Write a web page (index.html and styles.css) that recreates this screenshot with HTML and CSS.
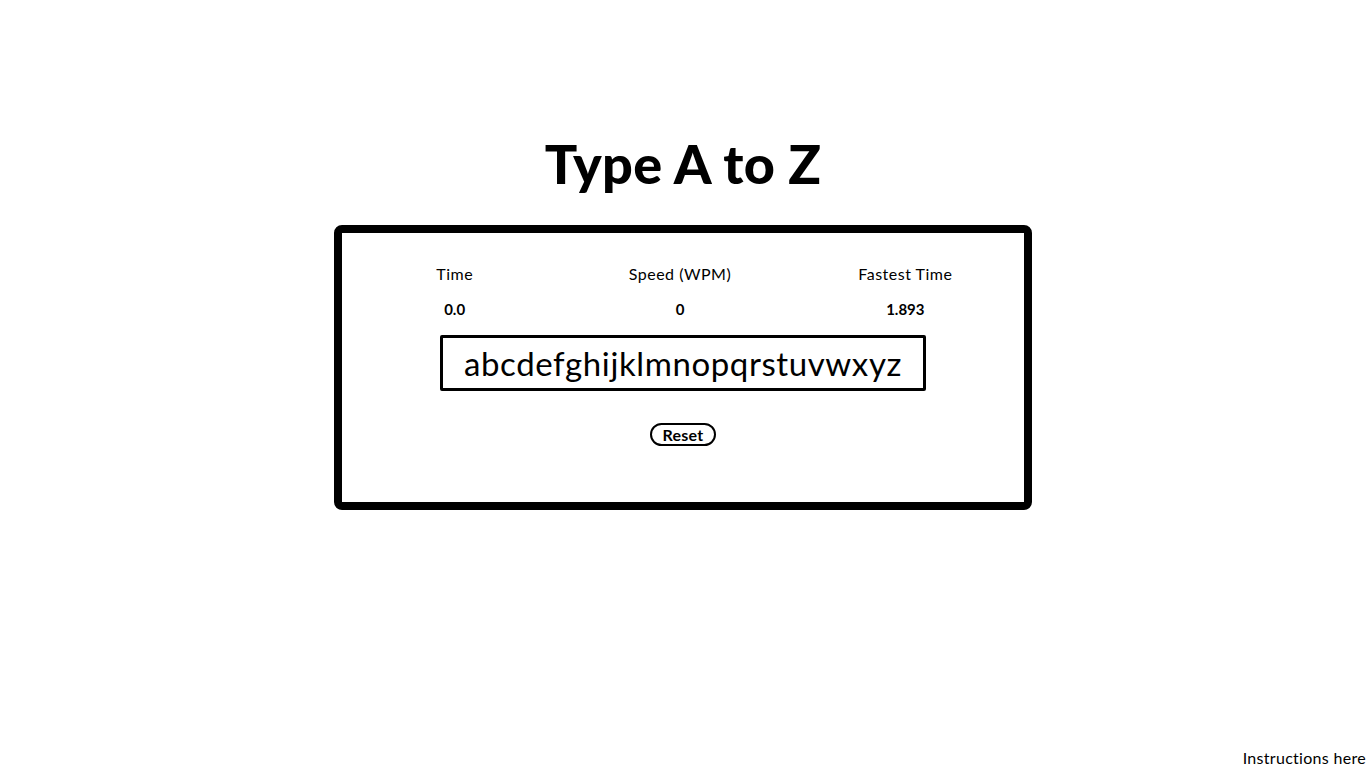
FILE: index.html
```html
<!DOCTYPE html>
<html lang="en">
<head>
<meta charset="utf-8">
<title>Type A to Z</title>
<link rel="stylesheet" href="styles.css">
</head>
<body>
<main class="page">
  <h1 class="title">Type A to Z</h1>
  <section class="card">
    <div class="stats">
      <div class="stat">
        <div class="stat-label">Time</div>
        <div class="stat-value">0.0</div>
      </div>
      <div class="stat">
        <div class="stat-label">Speed (WPM)</div>
        <div class="stat-value">0</div>
      </div>
      <div class="stat">
        <div class="stat-label">Fastest Time</div>
        <div class="stat-value">1.893</div>
      </div>
    </div>
    <div class="alphabet">abcdefghijklmnopqrstuvwxyz</div>
    <button class="reset" type="button">Reset</button>
  </section>
</main>
<footer class="instructions">Instructions here</footer>
</body>
</html>
```
FILE: styles.css
```css
* { box-sizing: border-box; }
html, body { margin: 0; padding: 0; }
body {
  min-height: 100vh;
  display: flex;
  flex-direction: column;
  font-family: Lato, "Noto Sans", sans-serif;
  color: #000;
  background: #fff;
}
.page {
  display: flex;
  flex-direction: column;
  align-items: center;
  padding-top: 132px;
}
.title {
  margin: 0;
  font-size: 54px;
  line-height: 64px;
  font-weight: 900;
  letter-spacing: 0.3px;
}
.card {
  margin-top: 29px;
  width: 698px;
  height: 285px;
  border: 8px solid #000;
  border-radius: 8px;
  display: flex;
  flex-direction: column;
  align-items: center;
  padding-top: 31px;
}
.stats {
  width: 676px;
  display: grid;
  grid-template-columns: repeat(3, 1fr);
}
.stat {
  display: flex;
  flex-direction: column;
  align-items: center;
  padding-right: 6px;
}
.stat-label {
  font-size: 16px;
  line-height: 20px;
  letter-spacing: 0.5px;
}
.stat-value {
  margin-top: 15px;
  font-size: 15px;
  line-height: 20px;
  font-weight: 700;
}
.alphabet {
  margin-top: 16px;
  width: 486px;
  height: 56px;
  border: 3px solid #000;
  border-radius: 2px;
  display: flex;
  align-items: center;
  justify-content: center;
  font-size: 33px;
  letter-spacing: 0.6px;
}
.reset {
  margin-top: 32px;
  height: 23px;
  padding: 0 10px;
  border: 2px solid #000;
  border-radius: 12px;
  background: #fff;
  font-family: inherit;
  font-size: 16px;
  line-height: 17px;
  font-weight: 700;
  letter-spacing: 0.3px;
  color: #000;
}
.instructions {
  margin-top: auto;
  align-self: flex-end;
  font-size: 16px;
  line-height: 20px;
  letter-spacing: 0.3px;
}
```
